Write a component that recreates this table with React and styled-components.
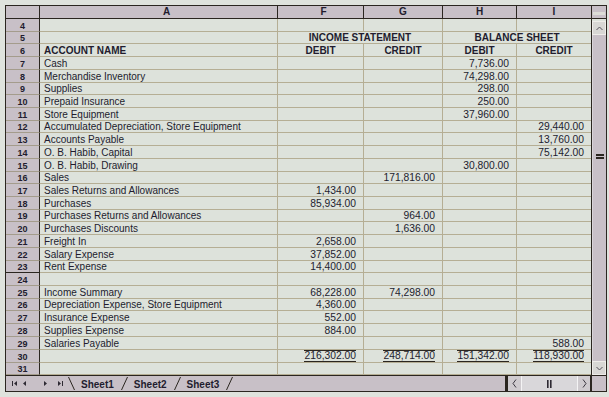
import React from 'react';
import styled, { createGlobalStyle } from 'styled-components';

const C = {
  page: '#dfe3dd',
  cell: '#dde2db',
  mauve: '#c8c0c7',
  grid: '#b5ae94',
  dark: '#2b2620',
  hdrLine: '#a49c8c',
  text: '#221c2e',
};

const Global = createGlobalStyle`
  html, body { margin: 0; padding: 0; background: ${C.page}; }
  body { font-family: "Liberation Sans", Arial, sans-serif; color: ${C.text}; }
`;

const Page = styled.div`
  width: 609px;
  height: 397px;
  padding: 5px 0 0 5px;
  box-sizing: border-box;
`;

const Frame = styled.div`
  width: 602px;
  box-sizing: border-box;
  border: 1px solid ${C.dark};
  display: flex;
  flex-direction: column;
  background: ${C.cell};
`;

const HeaderRow = styled.div`
  display: grid;
  grid-template-columns: 34px 238px 86px 79px 74px 75px 14px;
  height: 13px;
  box-sizing: border-box;
  border-bottom: 1px solid ${C.dark};
`;

const ColHead = styled.div`
  background: ${C.mauve};
  border-right: ${(p) => (p.$end ? 'none' : `1px solid ${C.dark}`)};
  font-weight: bold;
  font-size: 10px;
  line-height: 12px;
  text-align: center;
  padding-left: ${(p) => p.$shift || 0}px;
  box-sizing: border-box;
`;

const ScrollCap = styled.div`
  margin: 6px 1px 0;
  height: 3px;
  background: #dcdcd6;
`;

const Body = styled.div`
  display: flex;
`;

const Rows = styled.div`
  display: flex;
  flex-direction: column;
  width: 585px;
`;

const Row = styled.div`
  display: grid;
  grid-template-columns: 34px 238px 86px 79px 74px 74px;
  height: ${(p) => p.$h}px;
`;

const RowNum = styled.div`
  background: ${C.mauve};
  border-right: 1px solid ${C.dark};
  border-bottom: 1px solid ${(p) => (p.$strong ? C.dark : C.hdrLine)};
  font-weight: bold;
  font-size: 9px;
  line-height: 9px;
  display: flex;
  align-items: flex-end;
  justify-content: center;
  box-sizing: border-box;
`;

const Cell = styled.div`
  grid-column: span ${(p) => p.$span || 1};
  display: flex;
  align-items: flex-end;
  justify-content: ${(p) =>
    p.$align === 'right' ? 'flex-end' : p.$align === 'center' ? 'center' : 'flex-start'};
  padding: ${(p) => (p.$align === 'center' ? '0' : p.$align === 'right' ? '0 7px 0 0' : '0 0 0 4px')};
  border-right: ${(p) => (p.$last ? 'none' : `1px solid ${C.grid}`)};
  border-bottom: 1px solid ${C.grid};
  font-size: ${(p) => (p.$align === 'right' ? '10.3px' : '10px')};
  line-height: 10px;
  font-weight: ${(p) => (p.$bold ? 'bold' : 'normal')};
  white-space: nowrap;
  box-sizing: border-box;
  min-width: 0;
`;

const Total = styled.span`
  align-self: stretch;
  display: flex;
  align-items: flex-start;
  line-height: 9px;
  border-top: 1px solid ${C.dark};
  border-bottom: 1px solid ${C.dark};
`;

const VScroll = styled.div`
  width: 15px;
  box-sizing: border-box;
  border-left: 1px solid ${C.dark};
  display: flex;
  flex-direction: column;
  padding-top: 2px;
  background: ${C.cell};
`;

const VBtn = styled.div`
  height: 14px;
  box-sizing: border-box;
  background: #d8d7d4;
  border: 1px solid #eeece8;
  display: flex;
  align-items: center;
  justify-content: center;
`;

const VTrack = styled.div`
  flex: 1;
  background: ${C.mauve};
  border-left: 1px solid #d9d5d9;
  display: flex;
  justify-content: center;
`;

const Grip = styled.div`
  margin-top: 119px;
  width: 8px;
  height: 5px;
  box-sizing: border-box;
  border-top: 2px solid ${C.dark};
  border-bottom: 2px solid ${C.dark};
`;

const TabBar = styled.div`
  display: flex;
  height: 16px;
  box-sizing: border-box;
  border-top: 1px solid ${C.dark};
  background: ${C.mauve};
`;

const Nav = styled.div`
  width: 62px;
  display: flex;
  align-items: center;
  flex-shrink: 0;
`;

const NavIcon = styled.svg`
  margin-left: ${(p) => p.$ml}px;
  flex-shrink: 0;
`;

const TabStrip = styled.div`
  display: flex;
  align-items: stretch;
`;

const Slant = styled.svg`
  width: 7px;
  height: 15px;
  flex-shrink: 0;
`;

const TabLabel = styled.div`
  padding: 2px 7px 0 6px;
  font-weight: bold;
  font-size: 10px;
  line-height: 13px;
  color: ${C.text};
`;

const Spacer = styled.div`
  flex: 1;
`;

const HScroll = styled.div`
  width: 85px;
  box-sizing: border-box;
  border-left: 3px solid ${C.dark};
  display: flex;
  flex-shrink: 0;
`;

const HBtn = styled.div`
  width: ${(p) => p.$w}px;
  background: #cfcbcf;
  display: flex;
  align-items: center;
  justify-content: center;
`;

const HTrack = styled.div`
  width: 57px;
  box-sizing: border-box;
  background: #d9d7da;
  border-left: 1px solid #f4f3f4;
  border-right: 1px solid #f4f3f4;
  display: flex;
  align-items: center;
  justify-content: center;
`;

const Corner = styled.div`
  width: 16px;
  box-sizing: border-box;
  border-left: 2px solid ${C.dark};
  background: ${C.mauve};
  flex-shrink: 0;
`;

const rows = [
  { n: 4 },
  { n: 5, merged: true },
  { n: 6, a: 'ACCOUNT NAME', head: true },
  { n: 7, a: 'Cash', h: '7,736.00' },
  { n: 8, a: 'Merchandise Inventory', h: '74,298.00' },
  { n: 9, a: 'Supplies', h: '298.00' },
  { n: 10, a: 'Prepaid Insurance', h: '250.00' },
  { n: 11, a: 'Store Equipment', h: '37,960.00' },
  { n: 12, a: 'Accumulated Depreciation, Store Equipment', i: '29,440.00' },
  { n: 13, a: 'Accounts Payable', i: '13,760.00' },
  { n: 14, a: 'O. B. Habib, Capital', i: '75,142.00' },
  { n: 15, a: 'O. B. Habib, Drawing', h: '30,800.00' },
  { n: 16, a: 'Sales', g: '171,816.00' },
  { n: 17, a: 'Sales Returns and Allowances', f: '1,434.00' },
  { n: 18, a: 'Purchases', f: '85,934.00' },
  { n: 19, a: 'Purchases Returns and Allowances', g: '964.00' },
  { n: 20, a: 'Purchases Discounts', g: '1,636.00' },
  { n: 21, a: 'Freight In', f: '2,658.00' },
  { n: 22, a: 'Salary Expense', f: '37,852.00' },
  { n: 23, a: 'Rent Expense', f: '14,400.00', strong: true },
  { n: 24 },
  { n: 25, a: 'Income Summary', f: '68,228.00', g: '74,298.00' },
  { n: 26, a: 'Depreciation Expense, Store Equipment', f: '4,360.00' },
  { n: 27, a: 'Insurance Expense', f: '552.00' },
  { n: 28, a: 'Supplies Expense', f: '884.00' },
  { n: 29, a: 'Salaries Payable', i: '588.00' },
  { n: 30, total: true, f: '216,302.00', g: '248,714.00', h: '151,342.00', i: '118,930.00' },
  { n: 31 },
];

const TOTAL_H = 356;
const rowHeight = (i) => {
  const base =
    Math.round(((i + 1) * TOTAL_H) / rows.length) - Math.round((i * TOTAL_H) / rows.length);
  if (rows[i].total) return base + 1;
  if (i === rows.length - 1) return base - 1;
  return base;
};

const heads = { f: 'DEBIT', g: 'CREDIT', h: 'DEBIT', i: 'CREDIT' };

function DataRow({ r, h }) {
  if (r.merged) {
    return (
      <Row $h={h}>
        <RowNum>{r.n}</RowNum>
        <Cell />
        <Cell $span={2} $align="center" $bold>INCOME STATEMENT</Cell>
        <Cell $span={2} $align="center" $bold $last>BALANCE SHEET</Cell>
      </Row>
    );
  }
  return (
    <Row $h={h}>
      <RowNum $strong={r.strong}>{r.n}</RowNum>
      <Cell $bold={r.head}>{r.a}</Cell>
      {['f', 'g', 'h', 'i'].map((k) =>
        r.head ? (
          <Cell key={k} $align="center" $bold $last={k === 'i'}>
            {heads[k]}
          </Cell>
        ) : (
          <Cell key={k} $align="right" $last={k === 'i'}>
            {r[k] && (r.total ? <Total>{r[k]}</Total> : r[k])}
          </Cell>
        )
      )}
    </Row>
  );
}

const Chevron = ({ dir }) => {
  const pts = {
    up: '0.5,4 3.5,1 6.5,4',
    down: '0.5,1 3.5,4 6.5,1',
  };
  return (
    <svg width="7" height="5" viewBox="0 0 7 5">
      <polyline points={pts[dir]} fill="none" stroke="#55505a" strokeWidth="1" />
    </svg>
  );
};

const HChevron = ({ dir }) => (
  <svg width="5" height="9" viewBox="0 0 5 9">
    <polyline
      points={dir === 'left' ? '4,0.5 1,4.5 4,8.5' : '1,0.5 4,4.5 1,8.5'}
      fill="none"
      stroke="#3c3842"
      strokeWidth="1"
    />
  </svg>
);

export default function App() {
  return (
    <>
      <Global />
      <Page>
        <Frame>
          <HeaderRow>
            <ColHead />
            <ColHead $shift={16}>A</ColHead>
            <ColHead $shift={6}>F</ColHead>
            <ColHead>G</ColHead>
            <ColHead>H</ColHead>
            <ColHead>I</ColHead>
            <ColHead $end>
              <ScrollCap />
            </ColHead>
          </HeaderRow>
          <Body>
            <Rows>
              {rows.map((r, i) => (
                <DataRow key={r.n} r={r} h={rowHeight(i)} />
              ))}
            </Rows>
            <VScroll>
              <VBtn>
                <Chevron dir="up" />
              </VBtn>
              <VTrack>
                <Grip />
              </VTrack>
              <VBtn>
                <Chevron dir="down" />
              </VBtn>
            </VScroll>
          </Body>
          <TabBar>
            <Nav>
              <NavIcon $ml={6} width="5" height="5" viewBox="0 0 5 5">
                <rect x="0" y="0" width="1" height="5" fill="#2e2a33" />
                <polygon points="5,0 2,2.5 5,5" fill="#2e2a33" />
              </NavIcon>
              <NavIcon $ml={6} width="3" height="5" viewBox="0 0 3 5">
                <polygon points="3,0 0,2.5 3,5" fill="#2e2a33" />
              </NavIcon>
              <NavIcon $ml={18} width="3" height="5" viewBox="0 0 3 5">
                <polygon points="0,0 3,2.5 0,5" fill="#2e2a33" />
              </NavIcon>
              <NavIcon $ml={11} width="5" height="5" viewBox="0 0 5 5">
                <polygon points="0,0 3,2.5 0,5" fill="#2e2a33" />
                <rect x="4" y="0" width="1" height="5" fill="#2e2a33" />
              </NavIcon>
            </Nav>
            <TabStrip>
              <Slant viewBox="0 0 7 15">
                <line x1="0.5" y1="1" x2="6.5" y2="14" stroke={C.dark} strokeWidth="1" />
              </Slant>
              {['Sheet1', 'Sheet2', 'Sheet3'].map((s) => (
                <React.Fragment key={s}>
                  <TabLabel>{s}</TabLabel>
                  <Slant viewBox="0 0 7 15">
                    <line x1="0.5" y1="14" x2="6.5" y2="1" stroke={C.dark} strokeWidth="1" />
                  </Slant>
                </React.Fragment>
              ))}
            </TabStrip>
            <Spacer />
            <HScroll>
              <HBtn $w={13}>
                <HChevron dir="left" />
              </HBtn>
              <HTrack>
                <svg width="5" height="8" viewBox="0 0 5 8">
                  <rect x="0" y="0" width="1.6" height="8" fill="#2e2a33" />
                  <rect x="3" y="0" width="1.6" height="8" fill="#2e2a33" />
                </svg>
              </HTrack>
              <HBtn $w={12}>
                <HChevron dir="right" />
              </HBtn>
            </HScroll>
            <Corner />
          </TabBar>
        </Frame>
      </Page>
    </>
  );
}
